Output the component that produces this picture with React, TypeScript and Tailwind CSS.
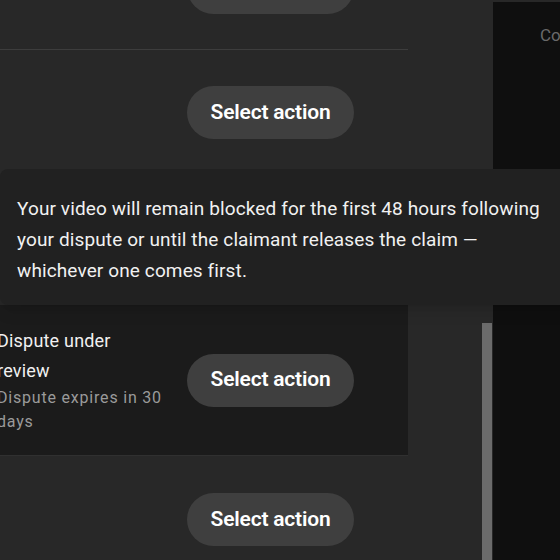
import React from "react";

function ActionButton() {
  return (
    <button className="h-[53px] w-[167px] shrink-0 rounded-full bg-[#3f3f3f] text-[21px] font-semibold tracking-[-0.2px] text-white">
      Select action
    </button>
  );
}

export default function App() {
  return (
    <div
      className="relative flex h-[560px] w-[560px] overflow-hidden bg-[#282828]"
      style={{ fontFamily: "Roboto, 'Liberation Sans', sans-serif" }}
    >
      {/* Main list */}
      <div className="flex w-[493px] shrink-0">
        <div className="flex w-[408px] shrink-0 flex-col">
          <div className="flex h-[50px] shrink-0 border-b border-[#3d3d3d] pl-[187px]">
            <div className="-mt-[39px]">
              <ActionButton />
            </div>
          </div>
          <div className="flex h-[255px] shrink-0 pl-[187px] pt-[36px]">
            <ActionButton />
          </div>
          <div className="flex h-[151px] shrink-0 items-center gap-[17px] border-b border-[#303030] bg-[#1b1b1b]">
            <div className="-ml-[3px] w-[173px] shrink-0">
              <p className="w-[150px] text-[18px] leading-[30px] tracking-[0.2px] text-[#f1f1f1]">Dispute under review</p>
              <p className="w-[172px] text-[16px] leading-[24px] tracking-[0.8px] text-[#9a9a9a]">Dispute expires in 30 days</p>
            </div>
            <ActionButton />
          </div>
          <div className="flex shrink-0 pl-[187px] pt-[37px]">
            <ActionButton />
          </div>
        </div>
        <div className="ml-auto mr-[1px] mt-[323px] w-[10px] bg-[#6b6b6b]" />
      </div>

      {/* Side panel */}
      <div className="mt-[2px] flex-1 bg-[#0f0f0f] pl-[47px] pt-[21px]">
        <p className="whitespace-nowrap text-[17px] text-[#6a6a6a]">Copyright</p>
      </div>

      {/* Tooltip */}
      <div className="absolute left-0 top-[169px] h-[136px] w-[580px] rounded-lg bg-[#212121] px-[17px] pt-[24px] text-[19px] leading-[31px] tracking-[0.12px] text-[#f1f1f1] shadow-lg">
        <p className="w-[530px]">
          Your video will remain blocked for the first 48 hours following your dispute or until the claimant releases the claim — whichever one comes first.
        </p>
      </div>
    </div>
  );
}
